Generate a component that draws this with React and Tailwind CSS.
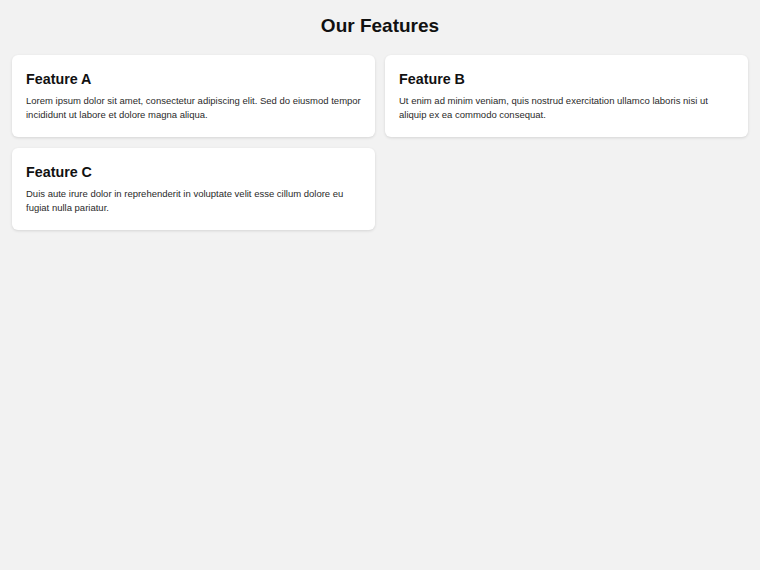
import React from 'react';

const features = [
  {
    title: 'Feature A',
    text: 'Lorem ipsum dolor sit amet, consectetur adipiscing elit. Sed do eiusmod tempor incididunt ut labore et dolore magna aliqua.',
  },
  {
    title: 'Feature B',
    text: 'Ut enim ad minim veniam, quis nostrud exercitation ullamco laboris nisi ut aliquip ex ea commodo consequat.',
  },
  {
    title: 'Feature C',
    text: 'Duis aute irure dolor in reprehenderit in voluptate velit esse cillum dolore eu fugiat nulla pariatur.',
  },
];

const App = () => {
  return (
    <div className="min-h-screen bg-[#f2f2f2] p-3 text-[#111] font-['Liberation_Sans',Arial,sans-serif]">
      <h1 className="text-center text-[19px] font-bold leading-[22px] mt-[3px] mb-[18px]">Our Features</h1>

      <div className="grid grid-cols-2 gap-[10px] gap-y-[11px]">
        {features.map((f) => (
          <div key={f.title} className="bg-white rounded-md shadow-[0_1px_3px_rgba(0,0,0,0.12)] px-[14px] pt-[15px] pb-[15px]">
            <h3 className="text-[14.3px] font-bold leading-[18px] mb-[6px]">{f.title}</h3>
            <p className="text-[9.5px] leading-[14px] text-[#2a2a2a]">{f.text}</p>
          </div>
        ))}
      </div>
    </div>
  );
};

export default App;
